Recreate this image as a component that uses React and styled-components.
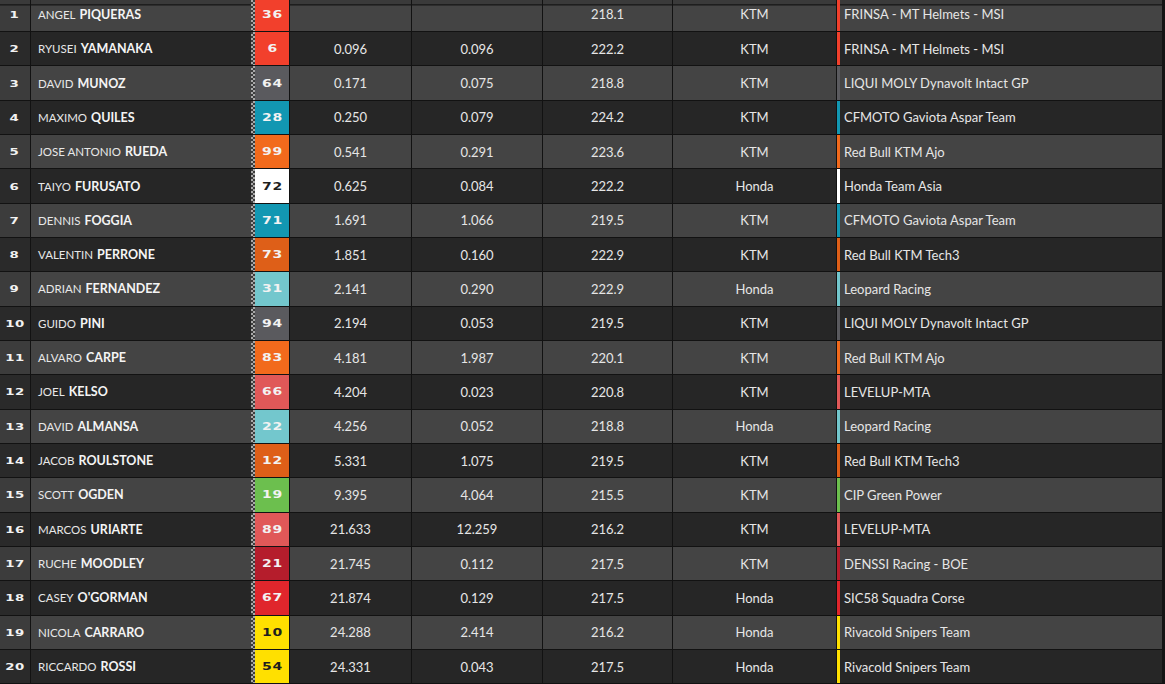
import React from 'react';
import styled, { createGlobalStyle, css } from 'styled-components';

const GlobalStyle = createGlobalStyle`
  * {
    box-sizing: border-box;
  }

  body {
    margin: 0;
    background: #141414;
    font-family: Lato, 'Open Sans', sans-serif;
    overflow: hidden;
  }
`;

const TEAM_COLORS = {
  frinsa: '#f2402c',
  intact: '#5a5a5e',
  aspar: '#1297b2',
  ajo: '#f26a1c',
  tech3: '#de5f18',
  asia: '#ffffff',
  leopard: '#73c7cd',
  levelup: '#e05858',
  cip: '#6cbf4e',
  denssi: '#b51d2c',
  sic58: '#e0262c',
  snipers: '#ffe000',
};

const riders = [
  { first: 'Angel', last: 'Piqueras', num: 36, gap: '', prev: '', speed: '218.1', bike: 'KTM', team: 'FRINSA - MT Helmets - MSI', color: 'frinsa' },
  { first: 'Ryusei', last: 'Yamanaka', num: 6, gap: '0.096', prev: '0.096', speed: '222.2', bike: 'KTM', team: 'FRINSA - MT Helmets - MSI', color: 'frinsa' },
  { first: 'David', last: 'Munoz', num: 64, gap: '0.171', prev: '0.075', speed: '218.8', bike: 'KTM', team: 'LIQUI MOLY Dynavolt Intact GP', color: 'intact' },
  { first: 'Maximo', last: 'Quiles', num: 28, gap: '0.250', prev: '0.079', speed: '224.2', bike: 'KTM', team: 'CFMOTO Gaviota Aspar Team', color: 'aspar' },
  { first: 'Jose Antonio', last: 'Rueda', num: 99, gap: '0.541', prev: '0.291', speed: '223.6', bike: 'KTM', team: 'Red Bull KTM Ajo', color: 'ajo' },
  { first: 'Taiyo', last: 'Furusato', num: 72, gap: '0.625', prev: '0.084', speed: '222.2', bike: 'Honda', team: 'Honda Team Asia', color: 'asia' },
  { first: 'Dennis', last: 'Foggia', num: 71, gap: '1.691', prev: '1.066', speed: '219.5', bike: 'KTM', team: 'CFMOTO Gaviota Aspar Team', color: 'aspar' },
  { first: 'Valentin', last: 'Perrone', num: 73, gap: '1.851', prev: '0.160', speed: '222.9', bike: 'KTM', team: 'Red Bull KTM Tech3', color: 'tech3' },
  { first: 'Adrian', last: 'Fernandez', num: 31, gap: '2.141', prev: '0.290', speed: '222.9', bike: 'Honda', team: 'Leopard Racing', color: 'leopard' },
  { first: 'Guido', last: 'Pini', num: 94, gap: '2.194', prev: '0.053', speed: '219.5', bike: 'KTM', team: 'LIQUI MOLY Dynavolt Intact GP', color: 'intact' },
  { first: 'Alvaro', last: 'Carpe', num: 83, gap: '4.181', prev: '1.987', speed: '220.1', bike: 'KTM', team: 'Red Bull KTM Ajo', color: 'ajo' },
  { first: 'Joel', last: 'Kelso', num: 66, gap: '4.204', prev: '0.023', speed: '220.8', bike: 'KTM', team: 'LEVELUP-MTA', color: 'levelup' },
  { first: 'David', last: 'Almansa', num: 22, gap: '4.256', prev: '0.052', speed: '218.8', bike: 'Honda', team: 'Leopard Racing', color: 'leopard' },
  { first: 'Jacob', last: 'Roulstone', num: 12, gap: '5.331', prev: '1.075', speed: '219.5', bike: 'KTM', team: 'Red Bull KTM Tech3', color: 'tech3' },
  { first: 'Scott', last: 'Ogden', num: 19, gap: '9.395', prev: '4.064', speed: '215.5', bike: 'KTM', team: 'CIP Green Power', color: 'cip' },
  { first: 'Marcos', last: 'Uriarte', num: 89, gap: '21.633', prev: '12.259', speed: '216.2', bike: 'KTM', team: 'LEVELUP-MTA', color: 'levelup' },
  { first: 'Ruche', last: 'Moodley', num: 21, gap: '21.745', prev: '0.112', speed: '217.5', bike: 'KTM', team: 'DENSSI Racing - BOE', color: 'denssi' },
  { first: 'Casey', last: "O'Gorman", num: 67, gap: '21.874', prev: '0.129', speed: '217.5', bike: 'Honda', team: 'SIC58 Squadra Corse', color: 'sic58' },
  { first: 'Nicola', last: 'Carraro', num: 10, gap: '24.288', prev: '2.414', speed: '216.2', bike: 'Honda', team: 'Rivacold Snipers Team', color: 'snipers' },
  { first: 'Riccardo', last: 'Rossi', num: 54, gap: '24.331', prev: '0.043', speed: '217.5', bike: 'Honda', team: 'Rivacold Snipers Team', color: 'snipers' },
];

const Table = styled.div`
  width: 1162px;
  margin-top: -2.3px;
  display: flex;
  flex-direction: column;
`;

const Row = styled.div`
  display: grid;
  grid-template-columns: 30px 219px 38px 121px 130px 129px 163px 1fr;
  column-gap: 1px;
  height: 34.33px;
  border-bottom: 1.3px solid #121212;
  background: #121212;
  color: #e6e6e6;

  --cell: ${({ $odd }) => ($odd ? '#444444' : '#262626')};
  --pos: ${({ $odd }) => ($odd ? '#3c3c3c' : '#2a2a2a')};
`;

const topEdge = css`
  box-shadow: inset 0 6.3px 0 #3a3a3a, inset 0 7.5px 0 #161616;
`;

const Cell = styled.div`
  display: flex;
  align-items: center;
  justify-content: ${({ $align }) => $align || 'center'};
  background: var(--cell);
  font-size: 13px;
  ${({ $first }) => $first && topEdge}
`;

const PosCell = styled(Cell)`
  background: var(--pos);
`;

const WideDigits = styled.span`
  display: inline-block;
  font-family: 'DejaVu Sans', sans-serif;
  font-weight: 700;
  font-size: ${({ $size }) => $size || 10}px;
  letter-spacing: 0.5px;
  transform: scaleX(1.4);
  color: ${({ $dark }) => ($dark ? '#1e1e1e' : '#f2f2f2')};
`;

const NameCell = styled(Cell)`
  padding-left: 7px;
  gap: 4px;
  margin-right: -1px;
`;

const First = styled.span`
  font-size: 11.5px;
  text-transform: uppercase;
  color: #e8e8e8;
`;

const Last = styled.span`
  font-size: 12.5px;
  font-weight: 700;
  text-transform: uppercase;
  color: #f4f4f4;
`;

const BadgeCell = styled.div`
  display: flex;
  align-items: center;
  justify-content: center;
  padding-left: 5px;
  background:
    repeating-conic-gradient(#a8a8a8 0 25%, #3c3c3c 0 50%) left top / 4px 4px repeat-y,
    ${({ $color }) => $color};
`;

const TeamCell = styled(Cell)`
  justify-content: flex-start;
  border-left: 3px solid ${({ $color }) => $color};
  padding-left: 4px;
`;

const App = () => {
  return (
    <>
      <GlobalStyle />
      <Table>
        {riders.map((r, i) => {
          const color = TEAM_COLORS[r.color];
          const dark = r.color === 'asia' || r.color === 'snipers';
          const first = i === 0;
          return (
            <Row key={r.num} $odd={i % 2 === 0}>
              <PosCell $first={first}>
                <WideDigits $size={9.5}>{i + 1}</WideDigits>
              </PosCell>
              <NameCell $align="flex-start" $first={first}>
                <First>{r.first}</First>
                <Last>{r.last}</Last>
              </NameCell>
              <BadgeCell $color={color}>
                <WideDigits $dark={dark}>{r.num}</WideDigits>
              </BadgeCell>
              <Cell $first={first}>{r.gap}</Cell>
              <Cell $first={first}>{r.prev}</Cell>
              <Cell $first={first}>{r.speed}</Cell>
              <Cell $first={first}>{r.bike}</Cell>
              <TeamCell $color={color} $first={first}>
                {r.team}
              </TeamCell>
            </Row>
          );
        })}
      </Table>
    </>
  );
};

export default App;
